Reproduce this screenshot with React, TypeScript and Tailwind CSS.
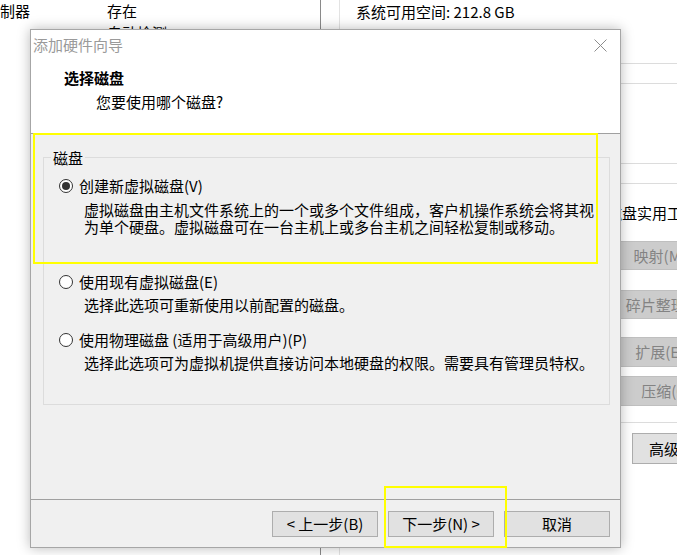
import React from 'react';

const Radio = ({ checked }: { checked?: boolean }) => (
    <span className="flex h-[14px] w-[14px] shrink-0 items-center justify-center rounded-full border border-[#333333] bg-white">
        {checked && <span className="h-[8px] w-[8px] rounded-full bg-[#333333]" />}
    </span>
);

const App: React.FC = () => {
    return (
        <div className="relative h-[555px] w-[677px] overflow-hidden bg-white text-[15px] leading-[20px] text-black font-['Noto_Sans_CJK_SC','Noto_Sans',sans-serif]">
            {/* settings window behind the wizard */}
            <div className="flex h-full">
                <div className="w-[321px] shrink-0 border-r border-[#8a8a8a]">
                    <div className="flex h-[22px] items-center">
                        <span className="w-[107px]">制器</span>
                        <span>存在</span>
                    </div>
                    <div className="flex h-[22px] items-center">
                        <span className="w-[107px]" />
                        <span>自动检测</span>
                    </div>
                </div>
                <div className="flex flex-1">
                    <div className="w-[19px] shrink-0 border-r border-[#e3e3e3]" />
                    <div className="flex-1 pl-[16px]">
                        <div className="flex h-[24px] items-center whitespace-nowrap">系统可用空间: 212.8 GB</div>
                        <div className="h-[40px] border-b border-[#dcdcdc]" />
                        <div className="h-[20px] border-b border-[#dcdcdc]" />
                        <div className="h-[80px] border-b border-[#dcdcdc]" />
                        <div className="h-[20px] border-b border-[#dcdcdc]" />
                        <div className="mt-[19px] whitespace-nowrap pl-[251px]">磁盘实用工具</div>
                        <div className="ml-[234px] mt-[18px] flex h-[29px] w-[152px] items-center justify-center border border-[#bfbfbf] bg-[#cccccc] text-[#838383]">映射(M)...</div>
                        <div className="ml-[234px] mt-[20px] flex h-[29px] w-[152px] items-center justify-center border border-[#bfbfbf] bg-[#cccccc] text-[#838383]">碎片整理(D)</div>
                        <div className="ml-[234px] mt-[18px] flex h-[30px] w-[152px] items-center justify-center border border-[#bfbfbf] bg-[#cccccc] text-[#838383]">扩展(E)...</div>
                        <div className="ml-[234px] mt-[9px] flex h-[30px] w-[152px] items-center justify-center border border-[#bfbfbf] bg-[#cccccc] text-[#838383]">压缩(C)</div>
                        <div className="mt-[16px] border-t border-[#dcdcdc]" />
                        <div className="ml-[276px] mt-[10px] flex h-[31px] w-[120px] items-center border border-[#adadad] bg-[#e1e1e1] pl-[16px] whitespace-nowrap">高级(V)...</div>
                    </div>
                </div>
            </div>

            {/* wizard dialog */}
            <div className="absolute left-[30px] top-[29px] flex h-[519px] w-[591px] flex-col border border-[#a6a6a6] bg-white shadow-[0_0_12px_rgba(0,0,0,0.28)]">
                <div className="flex h-[30px] shrink-0 items-center justify-between pl-[2px] pr-[13px] text-[#9a9a9a]">
                    <span>添加硬件向导</span>
                    <svg width="13" height="13" viewBox="0 0 13 13">
                        <path d="M0.5 0.5 L12.5 12.5 M12.5 0.5 L0.5 12.5" stroke="#8c8c8c" strokeWidth="1" fill="none" />
                    </svg>
                </div>
                <div className="h-[74px] shrink-0 border-b border-[#a0a0a0] pl-[33px] pt-[8px]">
                    <div className="font-bold">选择磁盘</div>
                    <div className="mt-[4px] pl-[32px]">您要使用哪个磁盘?</div>
                </div>
                <div className="h-[366px] shrink-0 border-b border-[#a0a0a0] bg-[#f0f0f0] pl-[12px] pr-[10px] pt-[23px]">
                    <div className="relative h-[248px] border border-[#dcdcdc] pl-[15px] pt-[18px]">
                        <span className="absolute -top-[10px] left-[7px] bg-[#f0f0f0] px-[2px]">磁盘</span>
                        <div className="flex h-[20px] items-center gap-[6px]">
                            <Radio checked />
                            <span>创建新虚拟磁盘(V)</span>
                        </div>
                        <div className="mt-[5px] whitespace-nowrap pl-[25px] leading-[17px]">
                            虚拟磁盘由主机文件系统上的一个或多个文件组成，客户机操作系统会将其视
                            <br />
                            为单个硬盘。虚拟磁盘可在一台主机上或多台主机之间轻松复制或移动。
                        </div>
                        <div className="mt-[37px] flex h-[20px] items-center gap-[6px]">
                            <Radio />
                            <span>使用现有虚拟磁盘(E)</span>
                        </div>
                        <div className="mt-[4px] whitespace-nowrap pl-[25px] leading-[17px]">选择此选项可重新使用以前配置的磁盘。</div>
                        <div className="mt-[17px] flex h-[20px] items-center gap-[6px]">
                            <Radio />
                            <span>使用物理磁盘 (适用于高级用户)(P)</span>
                        </div>
                        <div className="mt-[4px] whitespace-nowrap pl-[25px] leading-[17px]">选择此选项可为虚拟机提供直接访问本地硬盘的权限。需要具有管理员特权。</div>
                    </div>
                </div>
                <div className="flex flex-1 items-start justify-end gap-[10px] bg-[#f0f0f0] pr-[10px] pt-[11px]">
                    <button className="flex h-[26px] w-[106px] items-center justify-center border border-[#adadad] bg-[#e1e1e1]">&lt; 上一步(B)</button>
                    <button className="flex h-[26px] w-[106px] items-center justify-center border border-[#adadad] bg-[#e1e1e1]">下一步(N) &gt;</button>
                    <button className="flex h-[26px] w-[106px] items-center justify-center border border-[#adadad] bg-[#e1e1e1]">取消</button>
                </div>
            </div>

            {/* yellow annotation frames */}
            <div className="absolute left-[33px] top-[133px] h-[131px] w-[565px] border-2 border-[#ffff00]" />
            <div className="absolute left-[384px] top-[486px] h-[62px] w-[123px] border-2 border-[#ffff00]" />
        </div>
    );
};

export default App;
